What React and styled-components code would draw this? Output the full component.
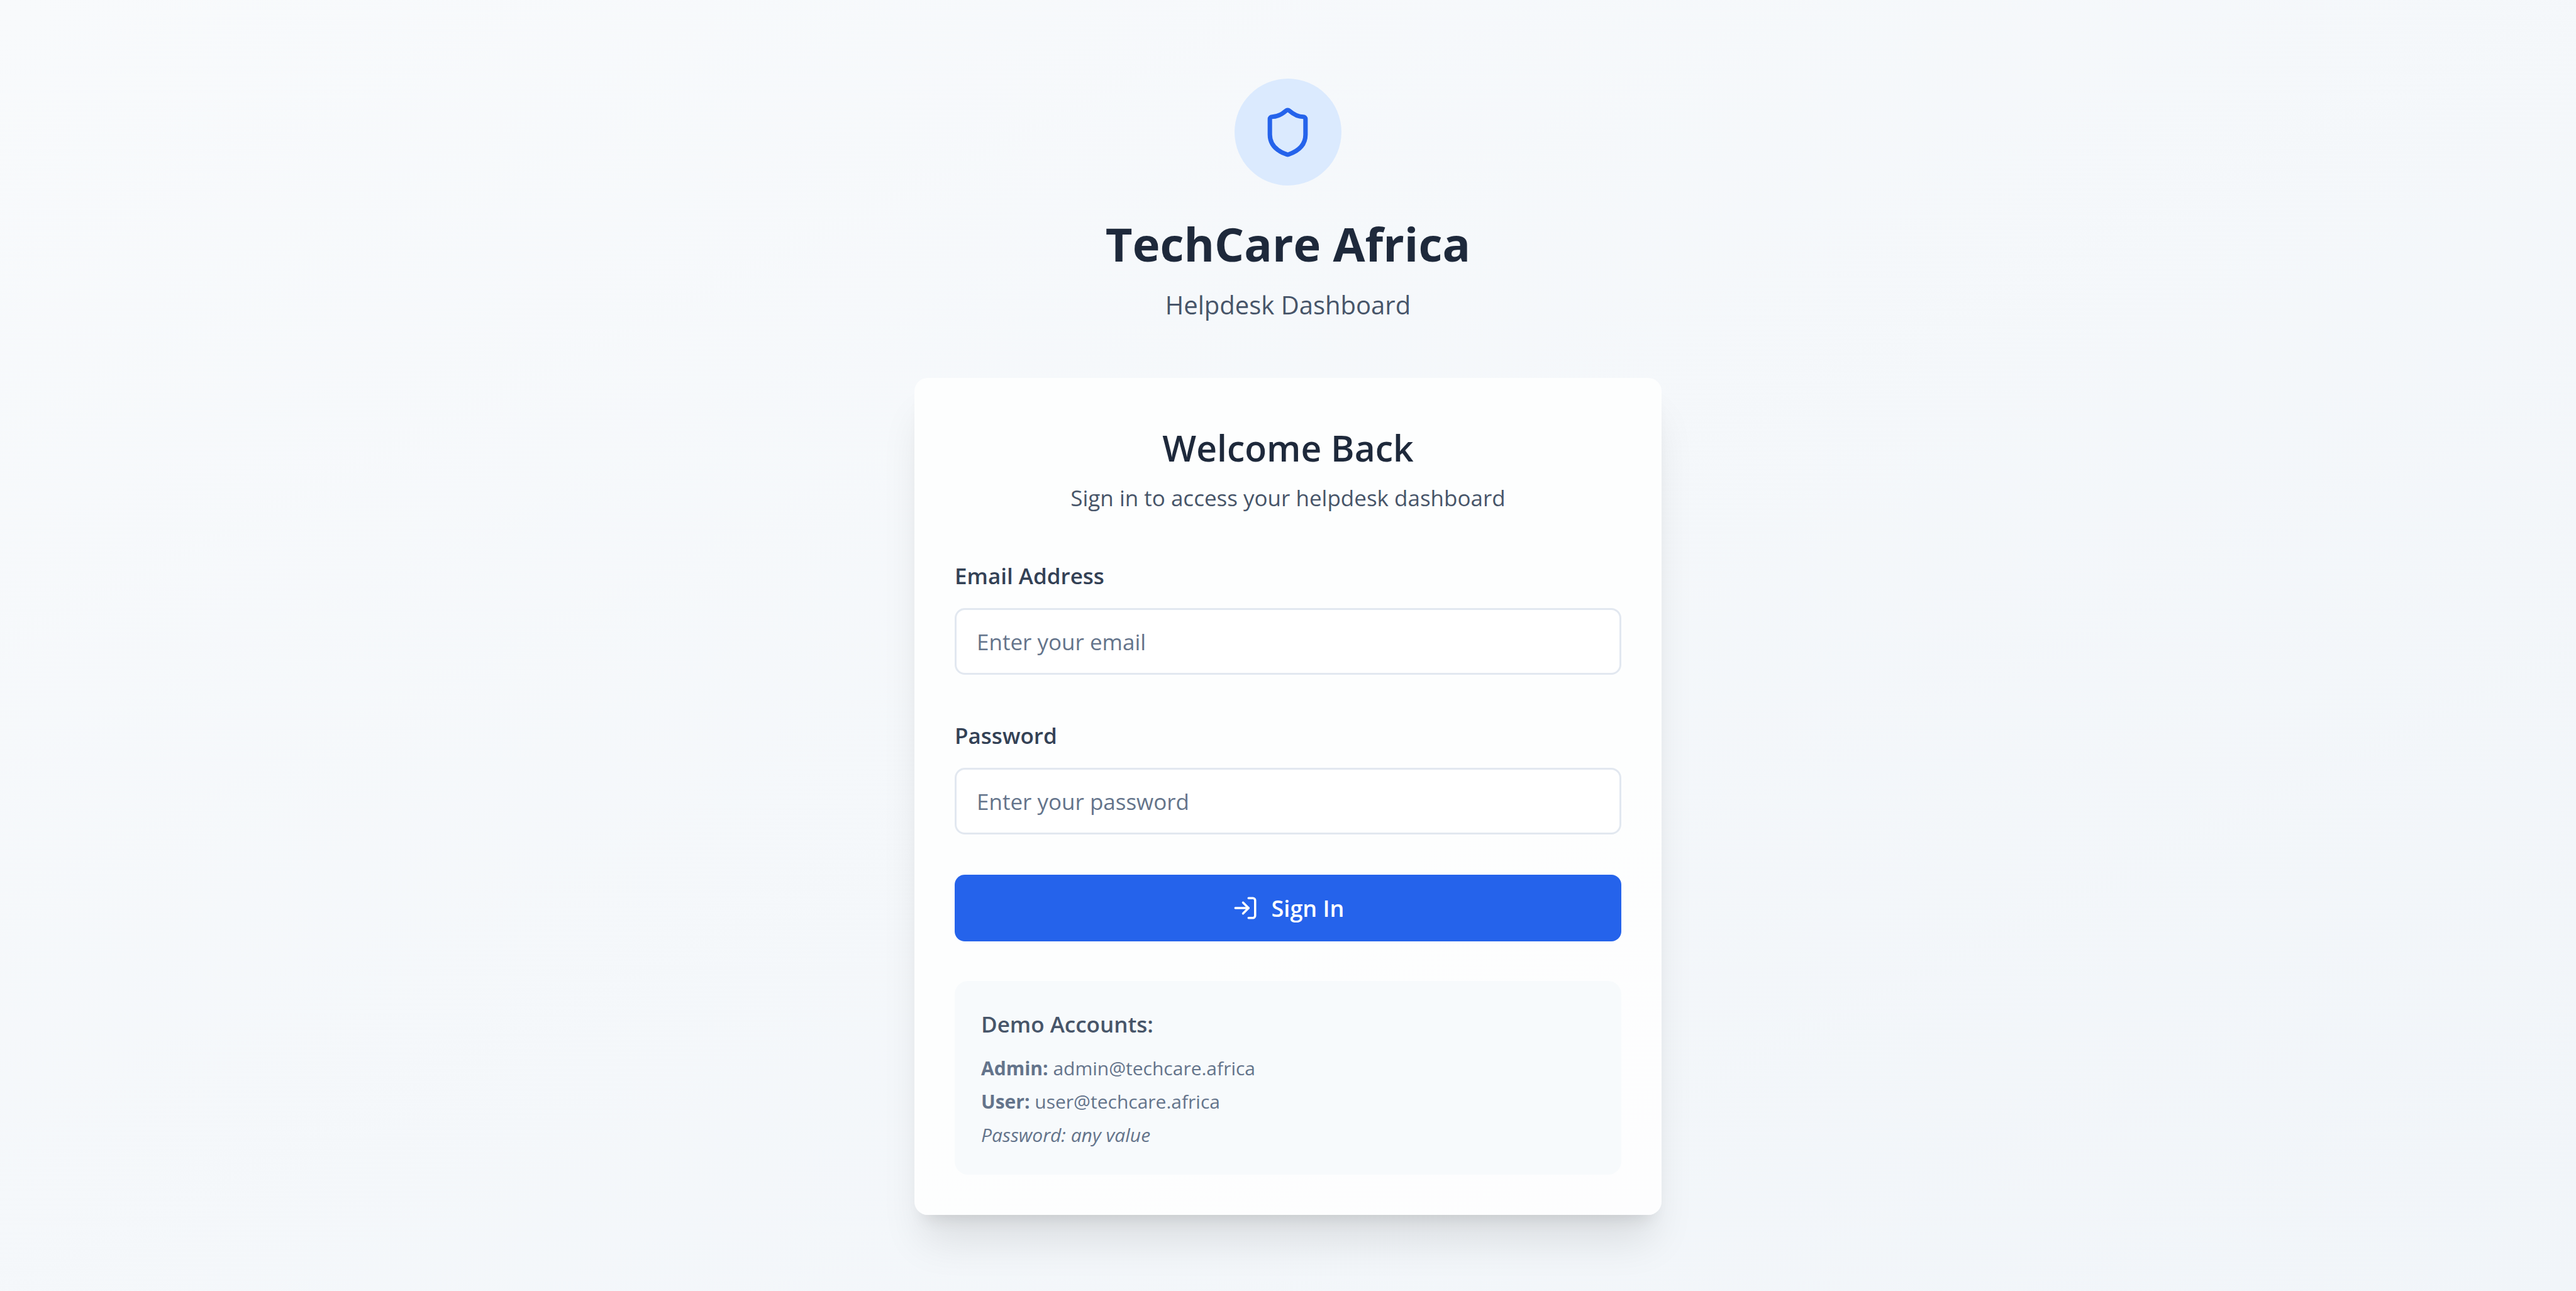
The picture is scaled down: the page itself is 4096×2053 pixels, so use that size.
import React, { useState } from 'react';
import styled, { createGlobalStyle } from 'styled-components';
import { LogIn, Shield } from 'lucide-react';

const GlobalStyle = createGlobalStyle`
  *, *::before, *::after {
    box-sizing: border-box;
  }
  body {
    margin: 0;
  }
  body, input, button {
    font-family: "Open Sans", "Noto Sans", sans-serif;
  }
`;

const Page = styled.main`
  min-height: 100vh;
  padding: 46px 42px 42px;
  display: flex;
  flex-direction: column;
  align-items: center;
  justify-content: center;
  background: linear-gradient(to bottom right, #f8fafc, #f1f5f9);
`;

const Brand = styled.header`
  display: flex;
  flex-direction: column;
  align-items: center;
  margin-bottom: 82px;
  text-align: center;
`;

const Badge = styled.div`
  width: 170px;
  height: 170px;
  margin-bottom: 42px;
  display: flex;
  align-items: center;
  justify-content: center;
  border-radius: 50%;
  background: #dbeafe;
  color: #2563eb;
`;

const BrandName = styled.h1`
  margin: 0 0 12px;
  font-size: 74px;
  line-height: 102px;
  font-weight: 700;
  color: #1e293b;
`;

const Tagline = styled.p`
  margin: 0;
  font-size: 40px;
  line-height: 68px;
  color: #475569;
`;

const Card = styled.section`
  width: 100%;
  max-width: 1188px;
  padding: 64px;
  border-radius: 21px;
  background: rgba(255, 255, 255, 0.8);
  box-shadow:
    0 53px 66px -13px rgba(0, 0, 0, 0.1),
    0 21px 26px -16px rgba(0, 0, 0, 0.1);
`;

const CardHeader = styled.div`
  margin-bottom: 58px;
  text-align: center;
`;

const CardTitle = styled.h2`
  margin: 0;
  font-size: 57px;
  line-height: 94px;
  font-weight: 600;
  color: #1e293b;
`;

const CardText = styled.p`
  margin: 0;
  font-size: 35px;
  line-height: 66px;
  color: #475569;
`;

const Form = styled.form`
  display: flex;
  flex-direction: column;
  gap: 64px;
`;

const Field = styled.div`
  display: flex;
  flex-direction: column;
  gap: 18px;
`;

const Label = styled.label`
  font-size: 35px;
  line-height: 66px;
  font-weight: 600;
  color: #334155;
`;

const Input = styled.input`
  width: 100%;
  height: 106px;
  padding: 0 32px;
  border: 3px solid #e2e8f0;
  border-radius: 16px;
  background: #fff;
  font-size: 35px;
  color: #1e293b;

  &::placeholder {
    color: #64748b;
    opacity: 1;
  }
  &:focus-visible {
    outline: 5px solid #2563eb;
    outline-offset: 5px;
  }
`;

const SubmitButton = styled.button`
  height: 106px;
  display: flex;
  align-items: center;
  justify-content: center;
  gap: 21px;
  border: 0;
  border-radius: 16px;
  background: #2563eb;
  color: #fff;
  font-size: 36px;
  font-weight: 600;
  cursor: pointer;

  &:hover {
    background: #1d4ed8;
  }
`;

const DemoBox = styled.aside`
  margin-top: 63px;
  padding: 42px;
  border-radius: 21px;
  background: #f7fafc;
`;

const DemoTitle = styled.h3`
  margin: 0 0 22px;
  font-size: 35px;
  line-height: 54px;
  font-weight: 600;
  color: #475569;
`;

const DemoList = styled.div`
  display: flex;
  flex-direction: column;
  gap: 11px;
`;

const DemoLine = styled.p`
  margin: 0;
  font-size: 30px;
  line-height: 42px;
  font-style: ${({ $italic }) => ($italic ? 'italic' : 'normal')};
  color: #64748b;
`;

const fields = [
  { id: 'email', label: 'Email Address', placeholder: 'Enter your email' },
  { id: 'password', label: 'Password', placeholder: 'Enter your password' },
];

const accounts = [
  { role: 'Admin', email: 'admin@techcare.africa' },
  { role: 'User', email: 'user@techcare.africa' },
];

export default function App() {
  const [values, setValues] = useState({ email: '', password: '' });

  return (
    <>
      <GlobalStyle />
      <Page>
        <Brand>
          <Badge>
            <Shield size={85} aria-hidden="true" />
          </Badge>
          <BrandName>TechCare Africa</BrandName>
          <Tagline>Helpdesk Dashboard</Tagline>
        </Brand>
        <Card>
          <CardHeader>
            <CardTitle>Welcome Back</CardTitle>
            <CardText>Sign in to access your helpdesk dashboard</CardText>
          </CardHeader>
          <Form onSubmit={(event) => event.preventDefault()}>
            {fields.map(({ id, label, placeholder }) => (
              <Field key={id}>
                <Label htmlFor={id}>{label}</Label>
                <Input
                  id={id}
                  type={id}
                  placeholder={placeholder}
                  value={values[id]}
                  onChange={(event) => setValues({ ...values, [id]: event.target.value })}
                />
              </Field>
            ))}
            <SubmitButton type="submit">
              <LogIn size={42} aria-hidden="true" />
              Sign In
            </SubmitButton>
          </Form>
          <DemoBox>
            <DemoTitle>Demo Accounts:</DemoTitle>
            <DemoList>
              {accounts.map(({ role, email }) => (
                <DemoLine key={role}>
                  <strong>{role}:</strong> {email}
                </DemoLine>
              ))}
              <DemoLine $italic>Password: any value</DemoLine>
            </DemoList>
          </DemoBox>
        </Card>
      </Page>
    </>
  );
}
